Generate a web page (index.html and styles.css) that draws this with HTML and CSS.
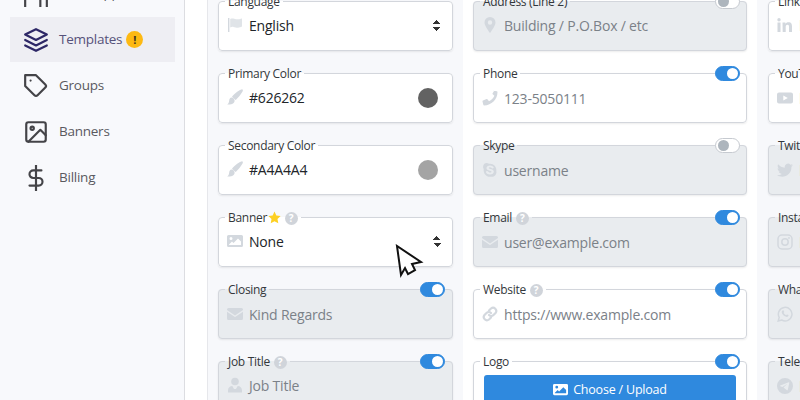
FILE: index.html
```html
<!DOCTYPE html>
<html lang="en">
<head>
<meta charset="utf-8">
<title>Templates</title>
<link rel="stylesheet" href="styles.css">
</head>
<body>
<svg class="defs" aria-hidden="true">
  <symbol id="i-flag" viewBox="0 0 16 16"><path d="M1 1h1.400v14H1z"/><path opacity=".7" d="M3.200 2c3-1.300 5.600 1 9 .2.900-.2 2.800-.8 2.800-.8v8.200c-3.600 2-6.200.6-8.500.3-1.300-.2-2.300.1-3.300.5z"/></symbol>
  <symbol id="i-brush" viewBox="0 0 16 16"><path d="M15.500.4c.6.500.4 1.400-.1 2.300C13.800 5.400 10.500 9.600 8.500 11L5 7.800C6.800 5.400 11 2 13.600.8c.8-.4 1.400-.7 1.900-.4zM4.600 8.600c1.400.2 2.900 1.500 3 3 .1 2.700-2.900 4.200-7.400 3.800 1.400-.9 1.700-2 1.900-3.500.2-1.800 1.100-3.400 2.500-3.300z"/></symbol>
  <symbol id="i-image" viewBox="0 0 16 16"><path fill-rule="evenodd" d="M1.500 2h13A1.500 1.500 0 0 1 16 3.500v9a1.500 1.500 0 0 1-1.500 1.500h-13A1.500 1.500 0 0 1 0 12.500v-9A1.500 1.500 0 0 1 1.500 2zM4 4a1.500 1.500 0 1 0 0 3 1.500 1.500 0 0 0 0-3zM2 12h12V8.500L11 5.500 6.500 10 5 8.500l-3 3z"/></symbol>
  <symbol id="i-env" viewBox="0 0 16 16"><path d="M1.500 2h13A1.500 1.500 0 0 1 16 3.500v.6L8 9.500 0 4.100v-.6A1.500 1.500 0 0 1 1.500 2zM0 5.800l8 5.300 8-5.300v6.700a1.500 1.500 0 0 1-1.500 1.500h-13A1.500 1.500 0 0 1 0 12.500z"/></symbol>
  <symbol id="i-user" viewBox="0 0 16 16"><circle cx="8" cy="4.500" r="3.800"/><path d="M1 15.500v-2.300C1 10.800 3 9 5.300 9L7 12h2l1.700-3C13 9 15 10.800 15 13.200v2.300z"/></symbol>
  <symbol id="i-pin" viewBox="0 0 16 16"><path fill-rule="evenodd" d="M8 0a5.500 5.500 0 0 1 5.500 5.500c0 3-3.500 7.500-5 10-.2.400-.8.400-1 0-1.500-2.500-5-7-5-10A5.500 5.500 0 0 1 8 0zm0 3.300a2.200 2.200 0 1 0 0 4.400 2.200 2.200 0 0 0 0-4.400z"/></symbol>
  <symbol id="i-phone" viewBox="0 0 16 16"><path d="M11.500.5l3.300.8c.4.100.7.400.7.800C15.500 9.500 9.500 15.500 2.100 15.500c-.4 0-.7-.3-.8-.7L.5 11.500c-.1-.4.100-.8.500-.9l3.500-1.500c.3-.1.700 0 .9.200l1.600 1.900c2.400-1.100 4.300-3.100 5.400-5.400L10.700 4.300c-.3-.2-.3-.6-.2-.9L12 .9c.1-.3-.1-.5-.5-.4z"/></symbol>
  <symbol id="i-skype" viewBox="0 0 16 16"><path fill-rule="evenodd" d="M4.500 1c1 0 1.800.4 2.500.8C10.800 1 15 4.300 14.300 9c.9 3.200-2 6.500-5.200 5.700C5 15.600 1 12 1.700 7 .2 4.300 1.800 1 4.500 1zM8 3.500c-2 0-3.500 1-3.500 2.600 0 3 5 2.300 5 3.700 0 .5-.6.900-1.500.9-1.800 0-1.700-1.600-3-1.600-.6 0-1 .4-1 .9 0 1.300 1.700 2.500 4 2.500 2.300 0 3.800-1.100 3.800-2.900 0-3-5-2.500-5-3.700 0-.4.500-.7 1.200-.7 1.500 0 1.500 1.200 2.700 1.200.6 0 1-.4 1-.9C11.500 4.500 10 3.500 8 3.500z"/></symbol>
  <symbol id="i-link" viewBox="0 0 16 16"><g fill="none" stroke="currentColor" stroke-width="2.200" stroke-linecap="round"><path d="M7 4.500l2-2a3.200 3.200 0 0 1 4.500 4.500l-2 2a3.200 3.200 0 0 1-4.500 0"/><path d="M9 11.500l-2 2A3.200 3.200 0 0 1 2.500 9l2-2a3.200 3.200 0 0 1 4.500 0"/></g></symbol>
  <symbol id="i-in" viewBox="0 0 16 16"><path d="M.5 5.500h3v9.500h-3zM2 1a1.700 1.700 0 1 1 0 3.400A1.700 1.700 0 0 1 2 1zM5.500 5.500h2.900v1.300c.5-.9 1.600-1.600 3.100-1.600 3 0 3.500 2 3.500 4.500V15h-3v-4.700c0-1.200 0-2.500-1.500-2.500s-1.800 1.200-1.800 2.400V15h-3z"/></symbol>
  <symbol id="i-yt" viewBox="0 0 16 16"><path fill-rule="evenodd" d="M2 2.500h12a2 2 0 0 1 2 2v7a2 2 0 0 1-2 2H2a2 2 0 0 1-2-2v-7a2 2 0 0 1 2-2zM6.300 5.500v5l4.500-2.500z"/></symbol>
  <symbol id="i-tw" viewBox="0 0 16 16"><path d="M16 3.200c-.6.300-1.200.4-1.900.5.700-.4 1.200-1 1.400-1.800-.6.400-1.300.6-2.100.8a3.300 3.300 0 0 0-5.600 3C5.100 5.600 2.700 4.300 1.100 2.300.3 3.800.7 5.700 2.100 6.700c-.5 0-1-.2-1.500-.4 0 1.600 1.100 3 2.600 3.300-.5.100-1 .1-1.500 0 .4 1.300 1.600 2.200 3.100 2.300A6.600 6.600 0 0 1 0 13.300C6.800 17.200 15 12.700 14.400 4.800c.6-.4 1.200-1 1.600-1.600z"/></symbol>
  <symbol id="i-ig" viewBox="0 0 16 16"><g fill="none" stroke="currentColor" stroke-width="1.500"><rect x="1" y="1" width="14" height="14" rx="4"/><circle cx="8" cy="8" r="3.200"/></g><circle cx="12" cy="4" r=".9"/></symbol>
  <symbol id="i-wa" viewBox="0 0 16 16"><path fill="none" stroke="currentColor" stroke-width="1.500" d="M1.200 15l1-3.600A6.800 6.800 0 1 1 4.700 14z"/><path d="M5.600 4.400c.4-.2.800-.2 1 .2l.6 1.400-.6 1c.6 1.100 1.400 1.800 2.500 2.300l.9-.9 1.500.7c.2.800-.4 1.800-1.800 1.800-2.500-.3-5-2.900-5-4.800 0-.7.300-1.300.9-1.700z"/></symbol>
  <symbol id="i-tg" viewBox="0 0 16 16"><path fill-rule="evenodd" d="M8 0a8 8 0 1 1 0 16A8 8 0 0 1 8 0zm3.700 4.200L3.300 7.600c-.5.200-.5.600 0 .7l2.100.7 5-3.200-3.900 3.800 3.500 2.600c.4.200.7.100.8-.4L12.300 4.800c.1-.5-.2-.8-.6-.6z"/></symbol>
</svg>

<div class="app">
  <nav class="sidebar">
    <ul class="menu">
      <li class="menu-item">
        <svg class="nav-icon" viewBox="0 0 24 24"><path d="M2 14v10M16 14v10M22 14v10"/></svg>
        <span>Email Apps</span>
      </li>
      <li class="menu-item active">
        <svg class="nav-icon" viewBox="0 0 24 24"><path d="M12 2L2 7l10 5 10-5zM2 17l10 5 10-5M2 12l10 5 10-5"/></svg>
        <span>Templates</span>
        <b class="badge">!</b>
      </li>
      <li class="menu-item">
        <svg class="nav-icon" viewBox="0 0 24 24"><path d="M20.590 13.410l-7.170 7.170a2 2 0 0 1-2.830 0L2 12V2h10l8.590 8.590a2 2 0 0 1 0 2.820z"/><path d="M7 7h.01"/></svg>
        <span>Groups</span>
      </li>
      <li class="menu-item">
        <svg class="nav-icon" viewBox="0 0 24 24"><rect x="3" y="3" width="18" height="18" rx="2"/><circle cx="8.500" cy="8.500" r="1.500"/><path d="M21 15l-5-5L5 21"/></svg>
        <span>Banners</span>
      </li>
      <li class="menu-item">
        <svg class="nav-icon" viewBox="0 0 24 24"><path d="M12 0v24M17 5H9.500a3.500 3.500 0 0 0 0 7h5a3.500 3.500 0 0 1 0 7H6"/></svg>
        <span>Billing</span>
      </li>
    </ul>
  </nav>

  <main class="content">
    <section class="panel tinted first">
      <div class="fields">
        <div class="field"><fieldset class="box"><legend>Language</legend>
          <div class="row up1"><svg class="ico"><use href="#i-flag"/></svg><span class="val">English</span><span class="arrows"></span></div></fieldset></div>
        <div class="field"><fieldset class="box"><legend>Primary Color</legend>
          <div class="row up1"><svg class="ico"><use href="#i-brush"/></svg><span class="val">#626262</span><span class="swatch primary"></span></div></fieldset></div>
        <div class="field"><fieldset class="box"><legend>Secondary Color</legend>
          <div class="row up1"><svg class="ico"><use href="#i-brush"/></svg><span class="val">#A4A4A4</span><span class="swatch secondary"></span></div></fieldset></div>
        <div class="field"><fieldset class="box"><legend>Banner <svg class="star" viewBox="0 0 24 24"><path d="M12 1l3.400 7.300 7.900 1-5.800 5.500 1.500 7.900-7-3.900-7 3.900 1.500-7.900L.7 9.300l7.900-1z"/></svg> <i class="help">?</i></legend>
          <div class="row up1"><svg class="ico"><use href="#i-image"/></svg><span class="val">None</span><span class="arrows"></span></div></fieldset></div>
        <div class="field"><fieldset class="box off"><legend>Closing</legend>
          <div class="row"><svg class="ico"><use href="#i-env"/></svg><span class="ph">Kind Regards</span></div></fieldset><span class="toggle on"></span></div>
        <div class="field"><fieldset class="box off"><legend>Job Title <i class="help">?</i></legend>
          <div class="row up1"><svg class="ico"><use href="#i-user"/></svg><span class="ph">Job Title</span></div></fieldset><span class="toggle on"></span></div>
      </div>
    </section>

    <section class="panel">
      <div class="fields">
        <div class="field"><fieldset class="box off"><legend>Address (Line 2)</legend>
          <div class="row up1"><svg class="ico"><use href="#i-pin"/></svg><span class="ph">Building / P.O.Box / etc</span></div></fieldset><span class="toggle"></span></div>
        <div class="field"><fieldset class="box"><legend>Phone</legend>
          <div class="row"><svg class="ico"><use href="#i-phone"/></svg><span class="ph">123-5050111</span></div></fieldset><span class="toggle on"></span></div>
        <div class="field"><fieldset class="box off"><legend>Skype</legend>
          <div class="row"><svg class="ico"><use href="#i-skype"/></svg><span class="ph">username</span></div></fieldset><span class="toggle"></span></div>
        <div class="field"><fieldset class="box off"><legend>Email <i class="help">?</i></legend>
          <div class="row"><svg class="ico"><use href="#i-env"/></svg><span class="ph">user@example.com</span></div></fieldset><span class="toggle on"></span></div>
        <div class="field"><fieldset class="box"><legend>Website <i class="help">?</i></legend>
          <div class="row"><svg class="ico"><use href="#i-link"/></svg><span class="ph">https://www.example.com</span></div></fieldset><span class="toggle on"></span></div>
        <div class="field"><fieldset class="box"><legend>Logo</legend>
          <button class="upload" type="button"><svg class="btn-ico"><use href="#i-image"/></svg>Choose / Upload</button></fieldset><span class="toggle on"></span></div>
      </div>
    </section>

    <section class="panel tinted last">
      <div class="fields">
        <div class="field"><fieldset class="box"><legend>LinkedIn</legend>
          <div class="row up1"><svg class="ico"><use href="#i-in"/></svg><span class="ph pale">https</span></div></fieldset></div>
        <div class="field"><fieldset class="box"><legend>YouTube</legend>
          <div class="row"><svg class="ico"><use href="#i-yt"/></svg><span class="ph pale">https</span></div></fieldset></div>
        <div class="field"><fieldset class="box off"><legend>Twitter</legend>
          <div class="row"><svg class="ico"><use href="#i-tw"/></svg><span class="ph pale">https</span></div></fieldset></div>
        <div class="field"><fieldset class="box off"><legend>Instagram</legend>
          <div class="row"><svg class="ico"><use href="#i-ig"/></svg><span class="ph pale">https</span></div></fieldset></div>
        <div class="field"><fieldset class="box off"><legend>WhatsApp</legend>
          <div class="row"><svg class="ico"><use href="#i-wa"/></svg></div></fieldset></div>
        <div class="field"><fieldset class="box off"><legend>Telegram</legend>
          <div class="row"><svg class="ico"><use href="#i-tg"/></svg><span class="ph pale">https</span></div></fieldset></div>
      </div>
    </section>
  </main>
</div>

<svg class="cursor" viewBox="0 0 30 36"><path d="M2 2l4 29 4-7 3 6 7-4-3-6 9-2z"/></svg>
</body>
</html>
```

FILE: styles.css
```css
* { box-sizing: border-box; }

html, body {
  margin: 0;
  width: 800px;
  height: 400px;
  overflow: hidden;
  background: #fff;
  font-family: "Open Sans", "Noto Sans", sans-serif;
  color: #212529;
}

.defs { width: 0; height: 0; position: absolute; }

.app { display: flex; width: 800px; height: 400px; overflow: hidden; }

/* sidebar */
.sidebar {
  flex: 0 0 185px;
  background: #f8f9fc;
  border-right: 1px solid #dcdde1;
  padding: 0 9px 0 10px;
}
.menu {
  list-style: none;
  margin: -29px 0 0;
  padding: 0;
  display: flex;
  flex-direction: column;
  gap: 1px;
}
.menu-item {
  height: 45px;
  display: flex;
  align-items: center;
  gap: 10px;
  padding-left: 13px;
  font-size: 13.5px;
  letter-spacing: -.25px;
  color: #5a5a5f;
}
.menu-item span { margin-top: -2px; }
.menu-item.active { background: #eeeef3; color: #56527a; }
.nav-icon {
  flex: none;
  width: 26px;
  height: 26px;
  fill: none;
  stroke: #444448;
  stroke-width: 2;
  stroke-linecap: round;
  stroke-linejoin: round;
}
.active .nav-icon { stroke: #2d2766; }
.badge {
  width: 17px;
  height: 17px;
  margin-left: -6px;
  border-radius: 50%;
  background: #fdb913;
  color: #3a3320;
  font-size: 11px;
  line-height: 17px;
  letter-spacing: 0;
  text-align: center;
}

/* panels */
.content { flex: 1; display: flex; margin-left: 22px; min-width: 0; }
.panel { flex: 0 0 294px; padding: 0 10px; background: #fff; }
.panel.tinted { background: #f7f8fb; }
.panel.first { flex-basis: 256px; border-left: 1px solid #e6e7eb; }
.panel.last { padding-left: 11px; }
.fields { margin-top: -7px; display: flex; flex-direction: column; gap: 14px; }
.field { position: relative; }

.box {
  margin: 0;
  min-width: 0;
  height: 58px;
  padding: 0 8px;
  border: 1px solid #d3d6dc;
  border-radius: 4px;
  background: #fff;
  box-shadow: 0 1px 2px rgba(0, 0, 0, .08);
}
.box.off { background: #e9ecef; }
legend {
  padding: 2px 3px 0;
  margin-left: -2px;
  font-size: 12px;
  line-height: 14px;
  letter-spacing: -.3px;
  color: #33373b;
  white-space: nowrap;
}

.row { display: flex; align-items: center; height: 20px; margin-top: 7px; font-size: 14px; letter-spacing: -.2px; }
.row.up1 { margin-top: 6px; }
.ico { flex: none; width: 16px; height: 16px; margin-right: 6px; fill: #d3d8de; color: #d3d8de; }
.val { flex: 1; color: #212529; }
.ph { flex: 1; color: #7b8188; white-space: nowrap; }
.ph.pale { color: #f3d3ad; }

.arrows {
  flex: none;
  width: 8px;
  height: 11px;
  margin-right: 3px;
  background:
    linear-gradient(to bottom right, transparent 50%, #333 50%) 0 0 / 4px 4px no-repeat,
    linear-gradient(to bottom left, transparent 50%, #333 50%) 4px 0 / 4px 4px no-repeat,
    linear-gradient(to top right, transparent 50%, #333 50%) 0 7px / 4px 4px no-repeat,
    linear-gradient(to top left, transparent 50%, #333 50%) 4px 7px / 4px 4px no-repeat;
}
.swatch { flex: none; width: 20px; height: 20px; margin: 2px 6px 0 0; border-radius: 50%; }
.swatch.primary { background: #626262; }
.swatch.secondary { background: #a4a4a4; }

.help {
  display: inline-block;
  width: 13px;
  height: 13px;
  margin-left: 1px;
  border-radius: 50%;
  background: #d0d4da;
  color: #fff;
  font-size: 10px;
  font-style: normal;
  font-weight: 700;
  line-height: 13px;
  letter-spacing: 0;
  text-align: center;
  vertical-align: 0;
}
.star { width: 13px; height: 13px; fill: #fdd023; vertical-align: -2px; margin-left: -2px; }

.toggle {
  position: absolute;
  top: 1px;
  right: 7px;
  width: 25px;
  height: 15px;
  border: 1px solid #c6cad0;
  border-radius: 8px;
  background: #fff;
}
.first .toggle { right: 8px; }
.toggle::after {
  content: "";
  position: absolute;
  top: 1px;
  left: 2px;
  width: 11px;
  height: 11px;
  border-radius: 50%;
  background: #adb5bd;
}
.toggle.on { background: #2f89de; border-color: #2f89de; }
.toggle.on::after { left: 11px; background: #fff; }

.upload {
  display: flex;
  align-items: center;
  justify-content: center;
  gap: 5px;
  width: 252px;
  height: 28px;
  margin: 6px 0 0 2px;
  border: 0;
  border-radius: 3px;
  background: #2f89de;
  color: #fff;
  font: 12.500px "Open Sans", "Noto Sans", sans-serif;
  letter-spacing: -.2px;
}
.btn-ico { width: 15px; height: 15px; fill: #fff; }

.cursor {
  position: absolute;
  left: 395px;
  top: 244px;
  width: 30px;
  height: 36px;
  fill: #fff;
  stroke: #111;
  stroke-width: 2;
  stroke-linejoin: miter;
}
```
